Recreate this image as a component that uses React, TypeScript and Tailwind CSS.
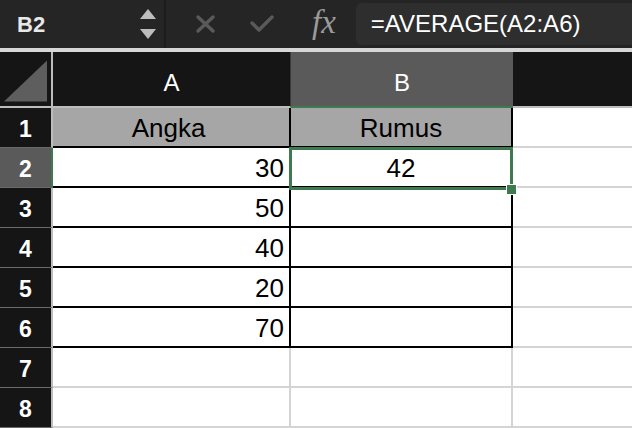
import React from "react";

const rows = [
  { n: 1, a: "Angka", b: "Rumus", head: true },
  { n: 2, a: "30", b: "42" },
  { n: 3, a: "50", b: "" },
  { n: 4, a: "40", b: "" },
  { n: 5, a: "20", b: "" },
  { n: 6, a: "70", b: "" },
  { n: 7, a: null, b: null },
  { n: 8, a: null, b: null },
];

const FormulaBar = () => (
  <div className="flex h-[48px] items-stretch bg-[#252525]">
    {/* name box */}
    <div className="flex w-[166px] items-center justify-between border-r-2 border-[#1c1c1c] pl-[17px] pr-[8px]">
      <span className="text-[22px] font-semibold text-[#e8e8e8]">B2</span>
      <div className="flex flex-col gap-[10px]">
        <svg width="16" height="10" viewBox="0 0 16 10">
          <path d="M8 0 L16 10 L0 10 Z" fill="#bdbdbd" />
        </svg>
        <svg width="16" height="10" viewBox="0 0 16 10">
          <path d="M0 0 L16 0 L8 10 Z" fill="#bdbdbd" />
        </svg>
      </div>
    </div>
    <div className="flex items-center pl-[29px]">
      <svg width="21" height="20" viewBox="0 0 21 20">
        <path d="M3 3 L18 17 M18 3 L3 17" stroke="#5a5a5a" strokeWidth="3.5" strokeLinecap="round" />
      </svg>
      <svg className="ml-[34px]" width="24" height="18" viewBox="0 0 24 18">
        <path d="M2 8 L9 15 L22 2" stroke="#5a5a5a" strokeWidth="3.5" fill="none" strokeLinecap="round" strokeLinejoin="round" />
      </svg>
      <span className="ml-[38px] pb-[2px] font-['Liberation_Serif'] text-[33px] italic text-[#9b9b9b]">fx</span>
    </div>
    <div className="ml-[20px] my-[3px] flex flex-1 items-center rounded-l-[6px] bg-[#2e2e2e] pl-[15px]">
      <span className="text-[24px] text-white">=AVERAGE(A2:A6)</span>
    </div>
  </div>
);

export default function App() {
  return (
    <div className="h-[428px] w-[632px] overflow-hidden bg-white font-['Liberation_Sans',sans-serif]">
      <FormulaBar />
      <div className="h-[4px] bg-[#d7d7d7]" />
      <div className="relative">
        {/* column headers */}
        <div className="flex h-[56px] bg-[#151515]">
          <div className="flex w-[53px] items-end justify-end border-r-2 border-b-2 border-[#bdbdbd] p-[4px]">
            <svg width="44" height="42" viewBox="0 0 44 42">
              <path d="M44 0 L44 42 L0 42 Z" fill="#5e5e5e" />
            </svg>
          </div>
          <div className="flex w-[238px] items-center justify-center border-r border-b-2 border-r-[#3a3a3a] border-b-[#bdbdbd] pt-[7px] text-[24px] text-white">
            A
          </div>
          <div className="flex w-[222px] items-center justify-center border-b-2 border-[#3e7a4f] bg-[#5a5a5a] pt-[7px] text-[24px] text-white">
            B
          </div>
          <div className="flex-1 border-b-2 border-[#bdbdbd]" />
        </div>
        {rows.map((r) => {
          const inTable = r.a !== null;
          const sel = r.n === 2;
          const line = inTable ? "border-black" : "border-[#d4d4d4]";
          return (
            <div key={r.n} className="flex h-[40px]">
              <div
                className={`flex w-[53px] items-center justify-center border-b border-r-2 border-b-[#6a6a6a] pt-[3px] text-[23px] font-semibold text-white ${
                  sel ? "border-r-[#3e7a4f] bg-[#5a5a5a]" : "border-r-[#bdbdbd] bg-[#151515]"
                }`}
              >
                {r.n}
              </div>
              <div
                className={`flex w-[238px] items-center border-r-2 border-b-2 pt-[3px] pr-[5px] text-[26px] text-black ${line} ${
                  r.head ? "justify-center bg-[#a6a6a6]" : "justify-end"
                }`}
              >
                {r.a}
              </div>
              <div
                className={`flex w-[222px] items-center justify-center border-r-2 border-b-2 pt-[3px] text-[26px] text-black ${line} ${
                  r.head ? "bg-[#a6a6a6]" : ""
                }`}
              >
                {r.b}
              </div>
              <div className="flex-1 border-b-2 border-[#d4d4d4]" />
            </div>
          );
        })}
        {/* selection of B2 */}
        <div className="pointer-events-none absolute left-[289px] top-[95px] h-[43px] w-[224px] border-[3px] border-[#3e7a4f]" />
        <div className="absolute left-[506px] top-[132px] h-[11px] w-[11px] border border-white bg-[#3e7a4f]" />
      </div>
    </div>
  );
}
